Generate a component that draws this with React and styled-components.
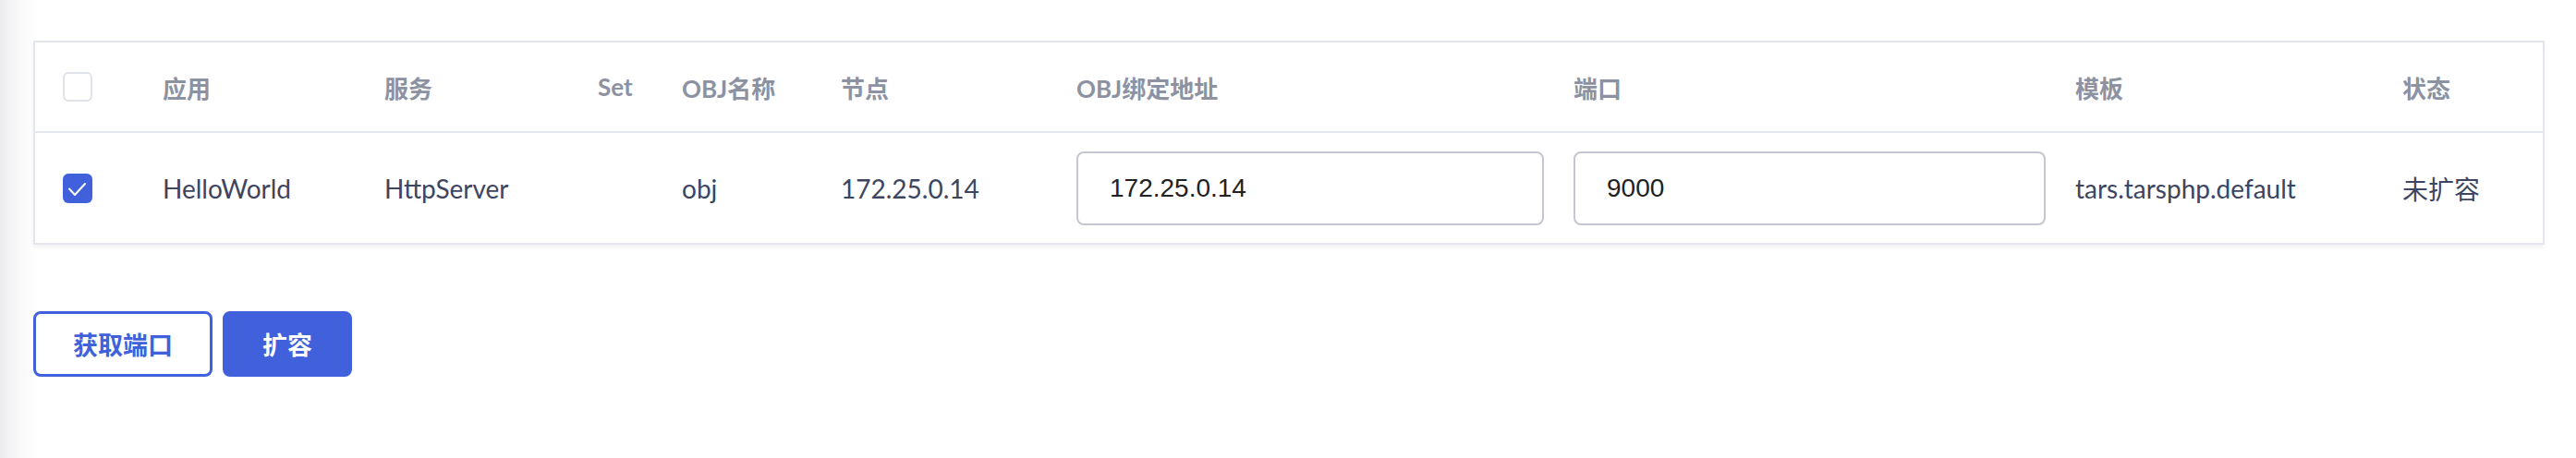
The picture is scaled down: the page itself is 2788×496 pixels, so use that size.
import React from 'react';
import styled, { createGlobalStyle } from 'styled-components';

const GlobalStyle = createGlobalStyle`
    html, body {
        margin: 0;
        padding: 0;
        background: #fff;
    }
    body {
        font-family: Lato, "Noto Sans CJK SC", sans-serif;
    }
`;

const Page = styled.div`
    width: 2788px;
    height: 496px;
    box-sizing: border-box;
    padding: 44px 34px 0 36px;
    background: linear-gradient(to right, #ececef 0, #f7f7f8 18px, #fff 40px);
`;

const Table = styled.div`
    border: 2px solid #e3e6ec;
    background: #fff;
    box-shadow: 0 3px 4px rgba(0, 0, 0, 0.06);
`;

const Row = styled.div`
    display: grid;
    grid-template-columns: 108px 240px 231px 91px 172px 255px 538px 543px 354px 1fr;
    align-items: center;
    padding-left: 30px;
    height: ${({ head }) => (head ? '96px' : '119px')};
    border-top: ${({ head }) => (head ? 'none' : '2px solid #e3e6ec')};
`;

const HeadCell = styled.div`
    font-size: 26px;
    font-weight: 700;
    color: #8c92a1;
    white-space: nowrap;
`;

const Cell = styled.div`
    font-size: 28px;
    color: #3d4560;
    white-space: nowrap;
`;

const Check = styled.div`
    width: 32px;
    height: 32px;
    box-sizing: border-box;
    border-radius: 6px;
    border: ${({ checked }) => (checked ? 'none' : '2px solid #e0e3ea')};
    background: ${({ checked }) => (checked ? '#4161dc' : '#fff')};
    display: flex;
`;

const Input = styled.input`
    width: ${({ w }) => w}px;
    height: 80px;
    box-sizing: border-box;
    border: 2px solid #c4c7cf;
    border-radius: 8px;
    padding: 0 34px;
    font-family: "Liberation Sans", Arial, sans-serif;
    font-size: 28px;
    color: #222;
    outline: none;
    background: #fff;
`;

const Actions = styled.div`
    display: flex;
    gap: 11px;
    margin-top: 72px;
`;

const Button = styled.button`
    height: 71px;
    padding: 0;
    width: ${({ w }) => w}px;
    box-sizing: border-box;
    border-radius: 8px;
    border: 3px solid #4161dc;
    background: ${({ primary }) => (primary ? '#4161dc' : '#fff')};
    color: ${({ primary }) => (primary ? '#fff' : '#4161dc')};
    font-family: "Noto Sans CJK SC", sans-serif;
    font-size: 27px;
    font-weight: 700;
    cursor: pointer;
`;

const heads = ['应用', '服务', 'Set', 'OBJ名称', '节点', 'OBJ绑定地址', '端口', '模板', '状态'];

export default function App() {
    return (
        <Page>
            <GlobalStyle />
            <Table>
                <Row head>
                    <Check />
                    {heads.map((h) => (
                        <HeadCell key={h}>{h}</HeadCell>
                    ))}
                </Row>
                <Row>
                    <Check checked>
                        <svg width="32" height="32" viewBox="0 0 32 32">
                            <path d="M7 16.5l6 6.5 11-12" fill="none" stroke="#fff" strokeWidth="2" strokeLinecap="round" strokeLinejoin="round" />
                        </svg>
                    </Check>
                    <Cell>HelloWorld</Cell>
                    <Cell>HttpServer</Cell>
                    <Cell />
                    <Cell>obj</Cell>
                    <Cell>172.25.0.14</Cell>
                    <div><Input w={506} defaultValue="172.25.0.14" /></div>
                    <div><Input w={511} defaultValue="9000" /></div>
                    <Cell>tars.tarsphp.default</Cell>
                    <Cell>未扩容</Cell>
                </Row>
            </Table>
            <Actions>
                <Button w={194}>获取端口</Button>
                <Button w={140} primary>扩容</Button>
            </Actions>
        </Page>
    );
}
